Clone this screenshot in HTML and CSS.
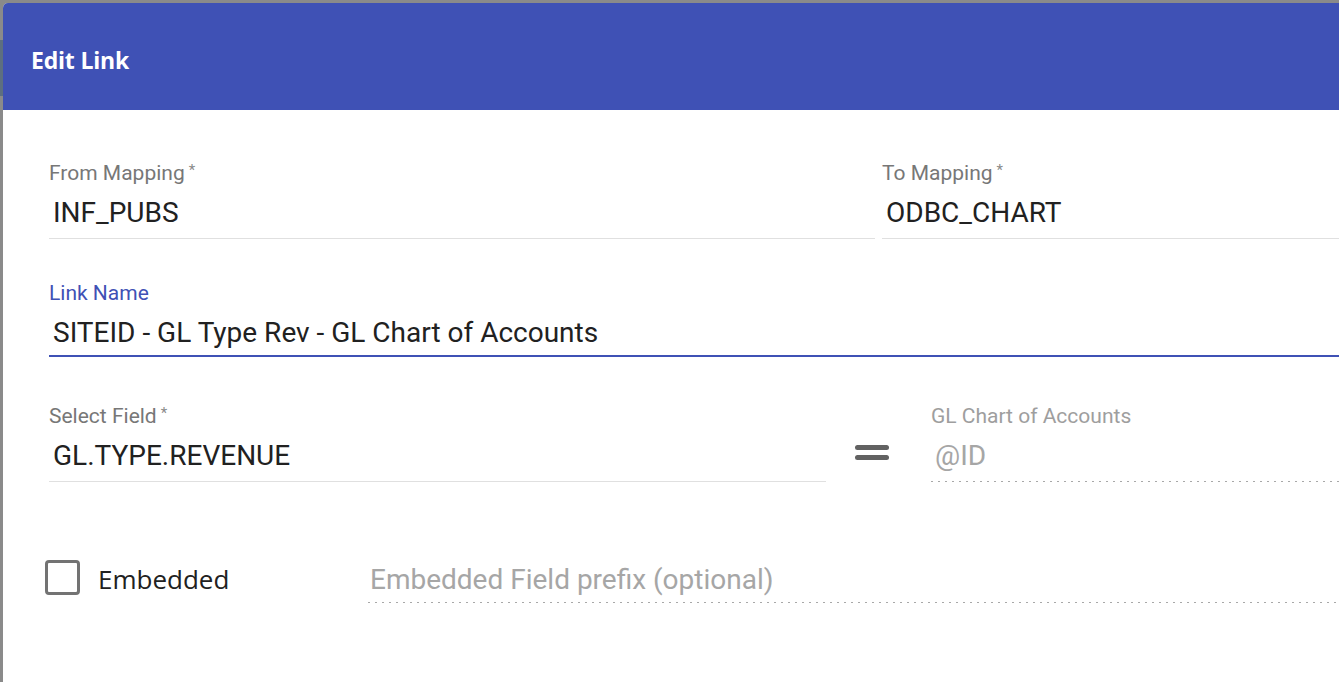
FILE: index.html
```html
<!DOCTYPE html>
<html lang="en">
<head>
<meta charset="utf-8">
<title>Edit Link</title>
<link rel="stylesheet" href="styles.css">
</head>
<body>
<div class="dialog">
  <header class="dialog-header">
    <h2 class="dialog-title">Edit Link</h2>
  </header>
  <div class="dialog-content">
    <div class="row-two">
      <div class="field">
        <label class="field-label">From Mapping<span class="req">*</span></label>
        <div class="field-value">INF_PUBS</div>
      </div>
      <div class="field">
        <label class="field-label">To Mapping<span class="req">*</span></label>
        <div class="field-value">ODBC_CHART</div>
      </div>
    </div>

    <div class="field field-focused row-link">
      <label class="field-label">Link Name</label>
      <div class="field-value">SITEID - GL Type Rev - GL Chart of Accounts</div>
    </div>

    <div class="row-select">
      <div class="field field-select">
        <label class="field-label">Select Field<span class="req">*</span></label>
        <div class="field-value">GL.TYPE.REVENUE</div>
      </div>
      <div class="equals" aria-hidden="true"><span></span><span></span></div>
      <div class="field field-disabled field-target">
        <label class="field-label">GL Chart of Accounts</label>
        <div class="field-value">@ID</div>
      </div>
    </div>

    <div class="row-embedded">
      <div class="checkbox-wrap">
        <span class="checkbox"></span>
        <span class="checkbox-label">Embedded</span>
      </div>
      <div class="field field-disabled field-prefix">
        <div class="field-value placeholder">Embedded Field prefix (optional)</div>
      </div>
    </div>
  </div>
</div>
</body>
</html>
```

FILE: styles.css
```css
html, body {
  margin: 0;
  padding: 0;
}

body {
  width: 1339px;
  height: 682px;
  overflow: hidden;
  background: linear-gradient(to bottom, #8a8a8a 0, #8a8a8a 40px, #5d6f80 40px, #5d6f80 96px, #8a8a8a 96px);
  font-family: Roboto, "Liberation Sans", sans-serif;
}

.dialog {
  margin: 3px 0 0 3px;
  width: 1760px;
  height: 700px;
  background: #ffffff;
  border-radius: 5px 5px 0 0;
  overflow: hidden;
}

.dialog-header {
  height: 107px;
  background: #3f51b5;
  display: flex;
  align-items: center;
  padding-left: 28px;
}

.dialog-title {
  margin: 0;
  padding-top: 7px;
  font-family: "Open Sans", "Liberation Sans", sans-serif;
  font-weight: 700;
  font-size: 23px;
  color: #ffffff;
  letter-spacing: -0.2px;
}

.dialog-content {
  padding: 50px 0 0 46px;
}

.row-two {
  display: grid;
  grid-template-columns: 826px 826px;
  column-gap: 7px;
}

.field {
  display: flex;
  flex-direction: column;
}

.field-label {
  font-size: 21px;
  line-height: 26px;
  color: #777777;
  margin-bottom: 10px;
}

.req {
  font-size: 15px;
  vertical-align: top;
  margin-left: 4px;
  position: relative;
  top: -3px;
  color: #8a8a8a;
}

.field-value {
  font-size: 28px;
  line-height: 34px;
  color: #212121;
  padding: 0 4px 8px;
  border-bottom: 1px solid #e0e0e0;
}

.row-link {
  margin-top: 41px;
  width: 1659px;
}

.field-focused .field-label {
  color: #3f51b5;
}

.field-focused .field-value {
  padding-bottom: 5px;
  border-bottom: 2px solid #3f51b5;
}

.row-select {
  margin-top: 46px;
  display: flex;
  align-items: flex-start;
}

.field-select {
  width: 777px;
}

.equals {
  margin: 42px 0 0 29px;
  width: 34px;
  display: flex;
  flex-direction: column;
  gap: 5px;
}

.equals span {
  display: block;
  height: 5px;
  border-radius: 3px;
  background: #626262;
}

.field-target {
  margin-left: 42px;
  width: 826px;
}

.field-disabled .field-label {
  color: #9e9e9e;
}

.field-disabled .field-value {
  color: #a6a6a6;
  border-bottom: none;
  background-image: repeating-linear-gradient(to right, #a8a8a8 0, #a8a8a8 2px, transparent 2px, transparent 7px);
  background-size: 100% 1px;
  background-position: left bottom;
  background-repeat: no-repeat;
  padding-bottom: 9px;
}

.row-embedded {
  margin-top: 78px;
  display: flex;
  align-items: flex-start;
}

.checkbox-wrap {
  margin-left: -4px;
  width: 323px;
  height: 35px;
  display: flex;
  align-items: center;
}

.checkbox {
  box-sizing: border-box;
  width: 35px;
  height: 35px;
  border: 3px solid #737373;
  border-radius: 4px;
  flex-shrink: 0;
}

.checkbox-label {
  margin-left: 18px;
  font-family: "Open Sans", "Liberation Sans", sans-serif;
  font-size: 26px;
  color: #212121;
  position: relative;
  top: 1px;
}

.field-prefix {
  flex: 1;
  margin-top: 3px;
}

.field-prefix .field-value {
  padding-left: 2px;
  padding-bottom: 6px;
}
```
